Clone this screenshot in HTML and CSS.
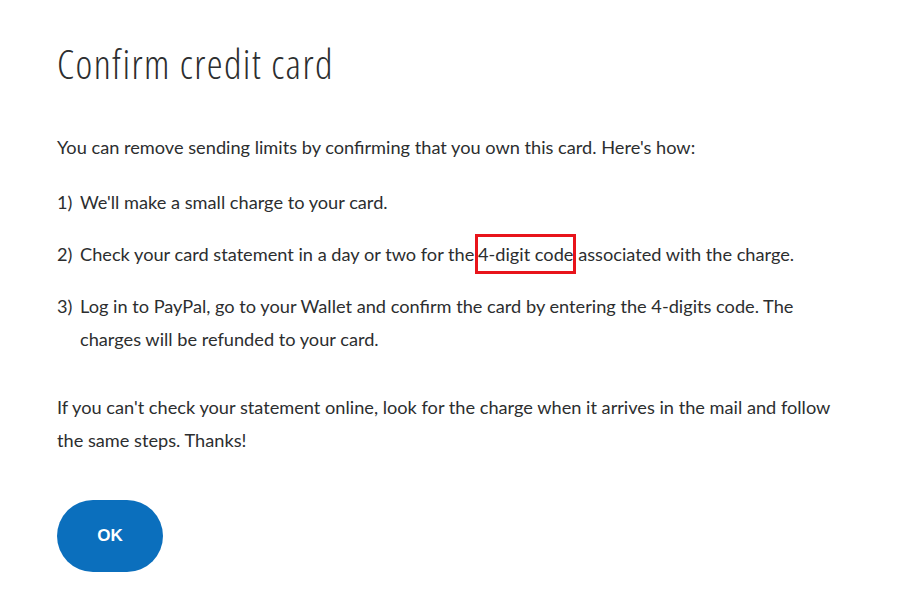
FILE: index.html
```html
<!DOCTYPE html>
<html lang="en">
<head>
    <meta charset="UTF-8">
    <meta name="viewport" content="width=device-width, initial-scale=1.0">
    <title>Confirm credit card</title>
    <link rel="stylesheet" href="styles.css">
</head>
<body>
    <main class="dialog">
        <h1 class="dialog-title">Confirm credit card</h1>

        <p class="dialog-intro">You can remove sending limits by confirming that you own this card. Here's how:</p>

        <ol class="steps">
            <li class="step">
                <span class="step-num">1)</span>
                <span class="step-text">We'll make a small charge to your card.</span>
            </li>
            <li class="step">
                <span class="step-num">2)</span>
                <span class="step-text">Check your card statement in a day or two for the <span class="highlight">4-digit code</span> associated with the charge.</span>
            </li>
            <li class="step">
                <span class="step-num">3)</span>
                <span class="step-text">Log in to PayPal, go to your Wallet and confirm the card by entering the 4-digits code. The charges will be refunded to your card.</span>
            </li>
        </ol>

        <p class="dialog-note">If you can't check your statement online, look for the charge when it arrives in the mail and follow the same steps. Thanks!</p>

        <button type="button" class="ok-btn">OK</button>
    </main>
</body>
</html>
```
FILE: styles.css
```css
body {
    margin: 0;
    background-color: #fff;
    color: #2c2e2f;
    font-family: Lato, "Open Sans", sans-serif;
}
.dialog {
    width: 790px;
    padding: 40px 0 0 57px;
}
.dialog-title {
    margin: 0;
    font-family: "Open Sans", sans-serif;
    font-size: 40px;
    font-weight: 300;
    font-stretch: 75%;
    letter-spacing: 1.4px;
    line-height: 48px;
    color: #2c2e2f;
}
.dialog-intro,
.dialog-note,
.step {
    font-size: 18.2px;
    line-height: 33px;
}
.dialog-intro {
    margin: 43px 0 0;
}
.steps {
    list-style: none;
    margin: 22px 0 0;
    padding: 0;
}
.step {
    display: flex;
    margin-bottom: 19px;
}
.step:last-child {
    margin-bottom: 0;
}
.step-num {
    flex: 0 0 23px;
}
.highlight {
    border: 3px solid #e8141b;
    padding: 6px 0;
    margin: 0 -3px 0 -4px;
}
.dialog-note {
    margin: 35px 0 0;
}
.ok-btn {
    display: block;
    margin-top: 43px;
    width: 106px;
    height: 72px;
    border: none;
    border-radius: 36px;
    background-color: #0b6fbd;
    color: #fff;
    font-family: "Liberation Sans", Arial, sans-serif;
    font-size: 17px;
    font-weight: 700;
    cursor: pointer;
}
```
